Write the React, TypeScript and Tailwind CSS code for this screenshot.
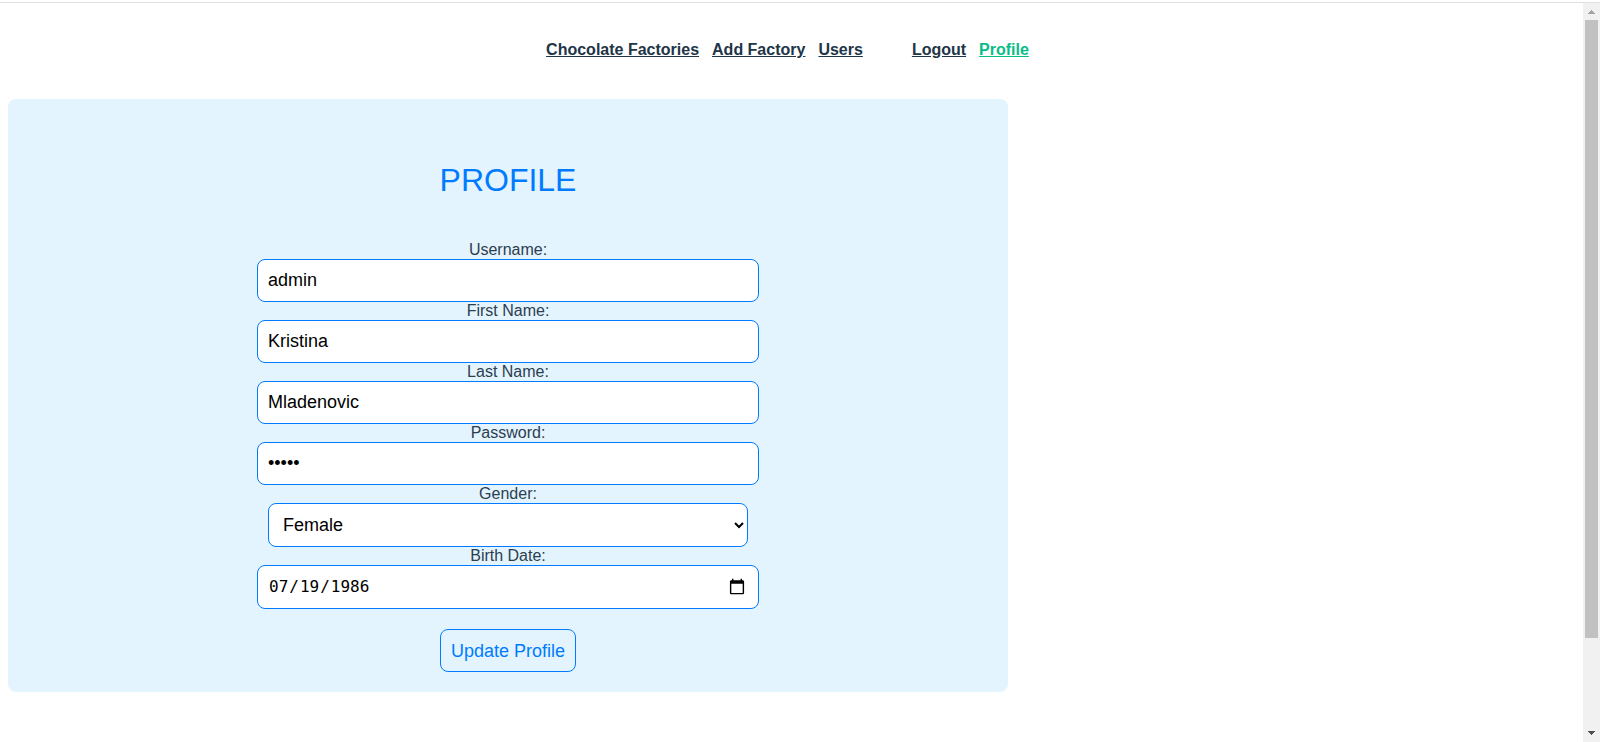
import { useState } from "react";
import type { ChangeEvent, FormEvent } from "react";

type Profile = {
  username: string;
  firstName: string;
  lastName: string;
  password: string;
  gender: string;
  birthDate: string;
};

const textFields: { key: keyof Profile; label: string; type: string }[] = [
  { key: "username", label: "Username:", type: "text" },
  { key: "firstName", label: "First Name:", type: "text" },
  { key: "lastName", label: "Last Name:", type: "text" },
  { key: "password", label: "Password:", type: "password" },
];

function NavLink({ label, active = false }: { label: string; active?: boolean }) {
  return (
    <a href="#" className={active ? "text-[#08bc86] underline" : "text-[#213547] underline"}>
      {label}
    </a>
  );
}

function ScrollTrack() {
  return (
    <div aria-hidden="true" className="flex w-[17px] shrink-0 flex-col items-center bg-[#f1f1f1]">
      <svg viewBox="0 0 17 17" className="size-[17px] shrink-0" shapeRendering="crispEdges">
        <path d="M8 7h1v1h1v1h1v1h1v1H5v-1h1V9h1V8h1z" fill="#a3a3a3" />
      </svg>
      <div className="w-[13px] grow-[618] bg-[#c1c1c1]" />
      <div className="grow-[87]" />
      <svg viewBox="0 0 17 17" className="size-[17px] shrink-0" shapeRendering="crispEdges">
        <path d="M5 6h7v1h-1v1h-1v1H9v1H8V9H7V8H6V7H5z" fill="#505050" />
      </svg>
    </div>
  );
}

export default function App() {
  const [profile, setProfile] = useState<Profile>({
    username: "admin",
    firstName: "Kristina",
    lastName: "Mladenovic",
    password: "admin",
    gender: "Female",
    birthDate: "1986-07-19",
  });

  const update =
    (key: keyof Profile) => (event: ChangeEvent<HTMLInputElement | HTMLSelectElement>) =>
      setProfile({ ...profile, [key]: event.target.value });

  return (
    <div className="flex min-h-screen flex-col bg-white font-['Liberation_Sans',Arial,sans-serif] text-base text-[#2c3e50]">
      <div className="mt-0.5 h-px bg-[#dfdfdf]" />
      <div className="flex grow">
        <div className="min-w-0 grow">
          <nav className="flex justify-center gap-[49px] pt-[35px] pr-2 pb-[37px] leading-6 font-bold">
            <div className="flex gap-[13px]">
              <NavLink label="Chocolate Factories" />
              <NavLink label="Add Factory" />
              <NavLink label="Users" />
            </div>
            <div className="flex gap-[13px]">
              <NavLink label="Logout" />
              <NavLink label="Profile" active />
            </div>
          </nav>

          <main className="mx-2 max-w-[1000px] rounded-lg bg-[#e3f4ff] px-5 pt-[61px] pb-5">
            <h1 className="text-center text-[32px] leading-10 text-[#007bff]">PROFILE</h1>
            <form
              className="mx-auto mt-[41px] flex max-w-[502px] flex-col items-center"
              onSubmit={(event: FormEvent) => event.preventDefault()}
            >
              {textFields.map(({ key, label, type }) => (
                <div key={key} className="flex w-full flex-col items-center">
                  <label htmlFor={key} className="leading-[18px]">
                    {label}
                  </label>
                  <input
                    id={key}
                    type={type}
                    value={profile[key]}
                    onChange={update(key)}
                    className="h-[43px] w-full rounded-lg border border-[#007bff] bg-white px-2.5 text-lg text-black"
                  />
                </div>
              ))}

              <label htmlFor="gender" className="leading-[18px]">
                Gender:
              </label>
              <div className="w-full px-[11px]">
                <select
                  id="gender"
                  value={profile.gender}
                  onChange={update("gender")}
                  className="block h-11 w-full rounded-lg border border-[#007bff] bg-white px-2.5 text-lg text-black"
                >
                  <option>Female</option>
                  <option>Male</option>
                </select>
              </div>

              <label htmlFor="birthDate" className="leading-[18px]">
                Birth Date:
              </label>
              <input
                id="birthDate"
                type="date"
                value={profile.birthDate}
                onChange={update("birthDate")}
                className="h-11 w-full rounded-lg border border-[#007bff] bg-white px-2.5 font-['DejaVu_Sans_Mono',monospace] text-base text-black [&::-webkit-calendar-picker-indicator]:text-lg"
              />

              <button
                type="submit"
                className="mt-5 h-[43px] rounded-lg border border-[#007bff] px-2.5 text-lg text-[#007bff]"
              >
                Update Profile
              </button>
            </form>
          </main>
        </div>
        <ScrollTrack />
      </div>
    </div>
  );
}
